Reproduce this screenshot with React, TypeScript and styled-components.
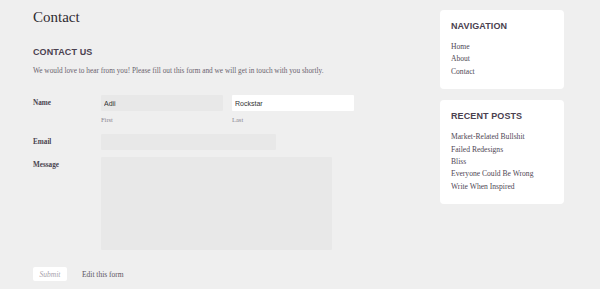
import styled, { createGlobalStyle } from "styled-components";

const GlobalStyle = createGlobalStyle`
  html, body {
    margin: 0;
    padding: 0;
    background: #efefef;
  }
  body {
    font-family: "Liberation Serif", "Times New Roman", serif;
    color: #5b5460;
    -webkit-font-smoothing: antialiased;
  }
`;

const Page = styled.div`
  display: flex;
  align-items: flex-start;
  gap: 27px;
  padding: 8px 0 0 33px;
  width: 600px;
  height: 289px;
  box-sizing: border-box;
  overflow: hidden;
`;

const Main = styled.main`
  flex: 0 0 380px;
`;

const PageTitle = styled.h1`
  margin: 0;
  font-family: "Liberation Serif", serif;
  font-weight: 400;
  font-size: 15px;
  line-height: 18px;
  color: #2f2b31;
`;

const Heading = styled.h2<{ $top?: number }>`
  margin: ${(p) => p.$top ?? 0}px 0 0;
  font-family: "Liberation Sans", Arial, sans-serif;
  font-weight: 700;
  font-size: 9px;
  line-height: 11px;
  letter-spacing: 0.1px;
  color: #4a414f;
`;

const Intro = styled.p`
  margin: 8px 0 0;
  font-size: 7.3px;
  line-height: 10px;
  color: #6a636e;
`;

const Form = styled.form`
  margin-top: 19px;
  display: grid;
  grid-template-columns: 68px auto;
  align-items: start;
`;

const Label = styled.label<{ $pad: number }>`
  padding-top: ${(p) => p.$pad}px;
  font-size: 7.2px;
  line-height: 9px;
  font-weight: 700;
  color: #4a4450;
`;

const Field = styled.div<{ $gap?: number }>`
  display: flex;
  gap: 9px;
  margin-bottom: ${(p) => p.$gap ?? 0}px;
`;

const Stack = styled.div`
  display: flex;
  flex-direction: column;
`;

const Input = styled.input<{ $w: number; $active?: boolean }>`
  box-sizing: border-box;
  width: ${(p) => p.$w}px;
  height: 16px;
  border: none;
  border-radius: 1px;
  padding: 0 3px;
  outline: none;
  background: ${(p) => (p.$active ? "#ffffff" : "#e8e8e8")};
  font-family: "Liberation Sans", Arial, sans-serif;
  font-size: 7px;
  color: #333;
`;

const Hint = styled.span`
  margin-top: 4px;
  font-size: 6.5px;
  line-height: 9px;
  color: #8a8590;
`;

const TextArea = styled.textarea`
  box-sizing: border-box;
  width: 231px;
  height: 93px;
  border: none;
  border-radius: 1px;
  background: #e8e8e8;
  resize: none;
  outline: none;
  display: block;
`;

const Actions = styled.div`
  display: flex;
  align-items: center;
  gap: 15px;
  margin-top: 17px;
`;

const SubmitButton = styled.button`
  box-sizing: border-box;
  width: 34px;
  height: 14px;
  border: none;
  border-radius: 2px;
  background: #ffffff;
  padding: 0;
  font-family: "Liberation Serif", serif;
  font-style: italic;
  font-size: 7.5px;
  color: #a7a2aa;
`;

const EditLink = styled.a`
  font-size: 7.5px;
  color: #5b5460;
  text-decoration: none;
`;

const Sidebar = styled.aside`
  flex: 0 0 124px;
  display: flex;
  flex-direction: column;
  gap: 11px;
  margin-top: 2px;
`;

const Card = styled.section`
  background: #ffffff;
  border-radius: 4px;
  padding: 11px;
`;

const LinkList = styled.ul`
  list-style: none;
  margin: 9px 0 0;
  padding: 0;
`;

const LinkItem = styled.li`
  font-size: 7.6px;
  line-height: 12.4px;
  color: #4f4854;
`;

const navLinks = ["Home", "About", "Contact"];
const posts = [
  "Market-Related Bullshit",
  "Failed Redesigns",
  "Bliss",
  "Everyone Could Be Wrong",
  "Write When Inspired",
];

export default function App() {
  return (
    <>
      <GlobalStyle />
      <Page>
        <Main>
          <PageTitle>Contact</PageTitle>
          <Heading $top={21}>CONTACT US</Heading>
          <Intro>
            We would love to hear from you! Please fill out this form and we
            will get in touch with you shortly.
          </Intro>
          <Form onSubmit={(e) => e.preventDefault()}>
            <Label $pad={4}>Name</Label>
            <Field $gap={10}>
              <Stack>
                <Input $w={122} defaultValue="Adii" />
                <Hint>First</Hint>
              </Stack>
              <Stack>
                <Input $w={122} $active defaultValue="Rockstar" />
                <Hint>Last</Hint>
              </Stack>
            </Field>
            <Label $pad={4}>Email</Label>
            <Field $gap={7}>
              <Input $w={175} />
            </Field>
            <Label $pad={4}>Message</Label>
            <Field>
              <TextArea />
            </Field>
          </Form>
          <Actions>
            <SubmitButton type="button">Submit</SubmitButton>
            <EditLink href="#">Edit this form</EditLink>
          </Actions>
        </Main>
        <Sidebar>
          <Card>
            <Heading>NAVIGATION</Heading>
            <LinkList>
              {navLinks.map((l) => (
                <LinkItem key={l}>{l}</LinkItem>
              ))}
            </LinkList>
          </Card>
          <Card>
            <Heading>RECENT POSTS</Heading>
            <LinkList>
              {posts.map((l) => (
                <LinkItem key={l}>{l}</LinkItem>
              ))}
            </LinkList>
          </Card>
        </Sidebar>
      </Page>
    </>
  );
}
